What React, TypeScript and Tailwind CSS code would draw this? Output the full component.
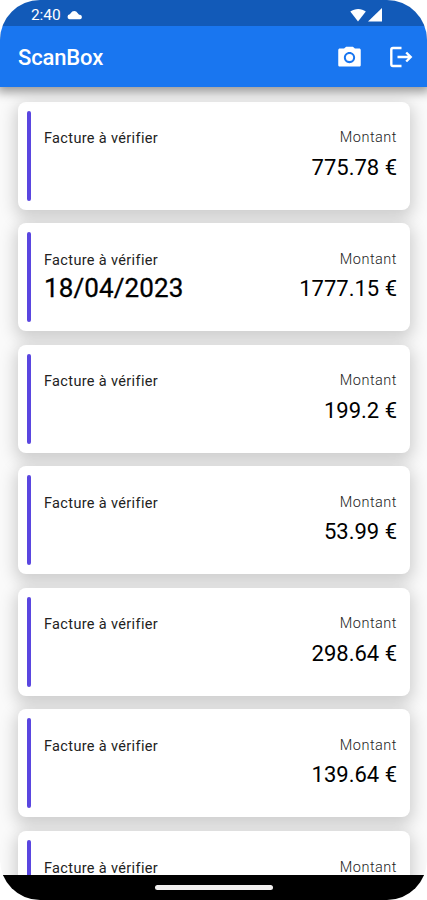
interface Invoice {
  id: number;
  amount: string;
  date?: string;
}

const invoices: Invoice[] = [
  { id: 1, amount: "775.78" },
  { id: 2, amount: "1777.15", date: "18/04/2023" },
  { id: 3, amount: "199.2" },
  { id: 4, amount: "53.99" },
  { id: 5, amount: "298.64" },
  { id: 6, amount: "139.64" },
  { id: 7, amount: "" },
];

export default function App() {
  return (
    <div className="flex h-[900px] w-[427px] flex-col overflow-hidden rounded-[40px] bg-[#fafafa] font-['Roboto',sans-serif] text-black">
      <StatusBar />
      <AppBar />
      <main className="min-h-0 flex-1 overflow-hidden pt-[14.5px] pr-[17px] pl-[18px]">
        <div className="flex flex-col gap-[13.6px]">
          {invoices.map((invoice) => (
            <InvoiceCard key={invoice.id} invoice={invoice} />
          ))}
        </div>
      </main>
      <footer className="z-10 flex h-[25px] shrink-0 justify-center bg-black pt-[10px]">
        <div className="h-[5px] w-[118px] rounded-full bg-[#f1efef]" />
      </footer>
    </div>
  );
}

function StatusBar() {
  return (
    <div className="z-20 flex h-[26px] shrink-0 items-center bg-[#125ab8] pt-[3px] pr-[45px] pl-[31px] text-white">
      <span className="mt-[2px] text-[15.5px] leading-none tracking-[-0.1px]">2:40</span>
      <svg className="ml-[6px] h-[10px] w-4" viewBox="0 0 16 10" fill="currentColor">
        <path d="M2.5 9.3A2.6 2.6 0 0 1 2.8 4.2L5.2 1.6Q7 .4 9.2 1.4L12.1 4.8H13A2.3 2.3 0 0 1 13.2 9.3Z" />
      </svg>
      <svg className="ml-auto h-[14px] w-[17px]" viewBox="0 0 17 14" fill="currentColor">
        <path d="M8 13.5.3 3.6C5 .1 11.5 .1 15.8 3.6Z" />
      </svg>
      <svg className="ml-px h-[14px] w-[14px]" viewBox="0 0 14 14" fill="currentColor">
        <path d="M0 13.5h14V0Z" />
      </svg>
    </div>
  );
}

function AppBar() {
  return (
    <header className="z-10 flex h-[61px] shrink-0 items-center bg-[#1976f0] pr-[14px] pl-[18px] text-white shadow-[0_2px_10px_3px_rgba(0,0,0,0.4)]">
      <h1 className="mt-[2px] text-[22px] font-medium leading-none tracking-[-0.15px]">ScanBox</h1>
      <button className="mt-[2px] ml-auto" aria-label="Scanner">
        <svg className="h-[27px] w-[27px]" viewBox="0 0 24 24" fill="currentColor">
          <circle cx="12" cy="12" r="3.2" />
          <path d="M9 2.4 7.17 4H3.4C2.6 4 2 4.6 2 5.4v13.2c0 .8.6 1.4 1.4 1.4h17.2c.8 0 1.4-.6 1.4-1.4V5.4c0-.8-.6-1.4-1.400-1.400h-3.770L15 2.400H9zm3 14.600c-2.760 0-5-2.240-5-5s2.240-5 5-5 5 2.240 5 5-2.240 5-5 5z" />
        </svg>
      </button>
      <button className="ml-[26px]" aria-label="Déconnexion">
        <svg
          className="h-[22px] w-6"
          viewBox="0 0 24 22"
          fill="none"
          stroke="currentColor"
          strokeWidth="2.4"
        >
          <path d="M12.5 2H4Q2.300 2 2.300 3.700V18.300Q2.300 20 4 20H12.500M8.500 11H21.500M17.200 6.500 21.700 11 17.200 15.500" />
        </svg>
      </button>
    </header>
  );
}

function InvoiceCard({ invoice }: { invoice: Invoice }) {
  return (
    <article className="flex h-[108px] shrink-0 rounded-[8px] bg-white py-[9px] pr-[13px] pl-[9px] shadow-[0_5px_16px_3px_rgba(0,0,0,0.18)]">
      <div className="w-[4px] rounded-[2px] bg-[#5a46e0]" />
      <div className="ml-[13px] pt-[20.5px]">
        <p className="text-[14.5px] leading-[16px] tracking-[0.35px] text-[#222]">Facture à vérifier</p>
        {invoice.date ? (
          <p className="mt-[5px] text-[26px] leading-[28px] tracking-[0.1px] [-webkit-text-stroke:0.3px_black]">
            {invoice.date}
          </p>
        ) : null}
      </div>
      <div className="ml-auto pt-[19.5px] text-right">
        <p className="text-[14.5px] font-light leading-[16px] tracking-[0.5px] text-[#222]">Montant</p>
        {invoice.amount ? (
          <p className="mt-[9.5px] text-[22px] leading-[24px]">{invoice.amount} €</p>
        ) : null}
      </div>
    </article>
  );
}
